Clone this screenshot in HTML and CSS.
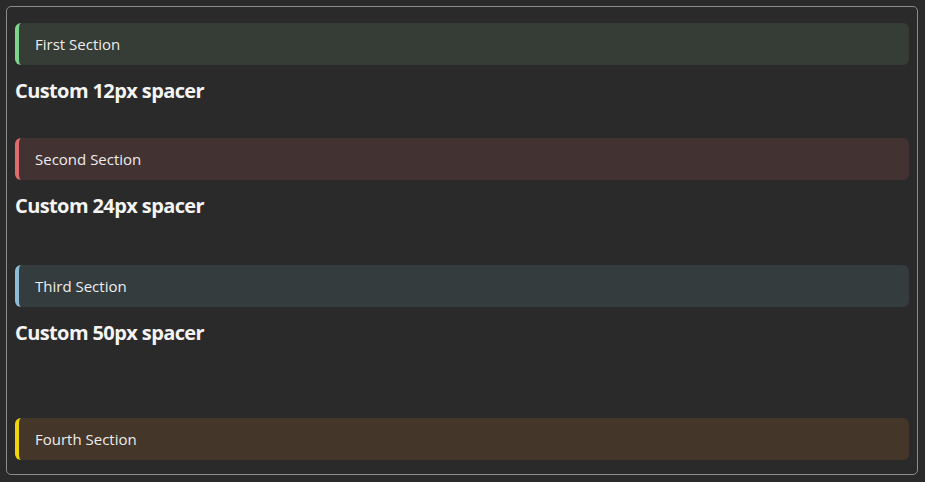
FILE: index.html
```html
<!DOCTYPE html>
<html>
<head>
<meta charset="utf-8">
<link rel="stylesheet" href="styles.css">
</head>
<body>
<div class="panel">
  <div class="section section-green">First Section</div>
  <h3 class="label">Custom 12px spacer</h3>
  <div class="spacer s12"></div>
  <div class="section section-red">Second Section</div>
  <h3 class="label">Custom 24px spacer</h3>
  <div class="spacer s24"></div>
  <div class="section section-blue">Third Section</div>
  <h3 class="label">Custom 50px spacer</h3>
  <div class="spacer s50"></div>
  <div class="section section-yellow">Fourth Section</div>
</div>
</body>
</html>
```

FILE: styles.css
```css
html, body {
  margin: 0;
  background: #2a2a2a;
}
body {
  padding: 6px 7px 7px 6px;
  font-family: "Open Sans", "Noto Sans", sans-serif;
  color: #f2f2f2;
}
.panel {
  border: 1px solid #8c8c8c;
  border-radius: 5px;
  padding: 16px 8px 15px 8px;
  box-sizing: border-box;
  height: 469px;
}
.section {
  height: 42px;
  box-sizing: border-box;
  display: flex;
  align-items: center;
  padding-left: 16px;
  border-left: 4px solid;
  border-radius: 6px;
  font-size: 15px;
  color: #ededed;
}
.section-green { background: #363d36; border-left-color: #7fd38a; }
.section-red { background: #433232; border-left-color: #e06c6c; }
.section-blue { background: #343c3e; border-left-color: #8bbcd8; }
.section-yellow { background: #45362a; border-left-color: #f2d40c; }
.label {
  margin: 12px 0 21px;
  font-size: 20px;
  line-height: 28px;
  font-weight: 700;
  letter-spacing: -0.6px;
  color: #f4f4f4;
}
.s12 { height: 12px; }
.s24 { height: 24px; }
.s50 { height: 50px; }
```
